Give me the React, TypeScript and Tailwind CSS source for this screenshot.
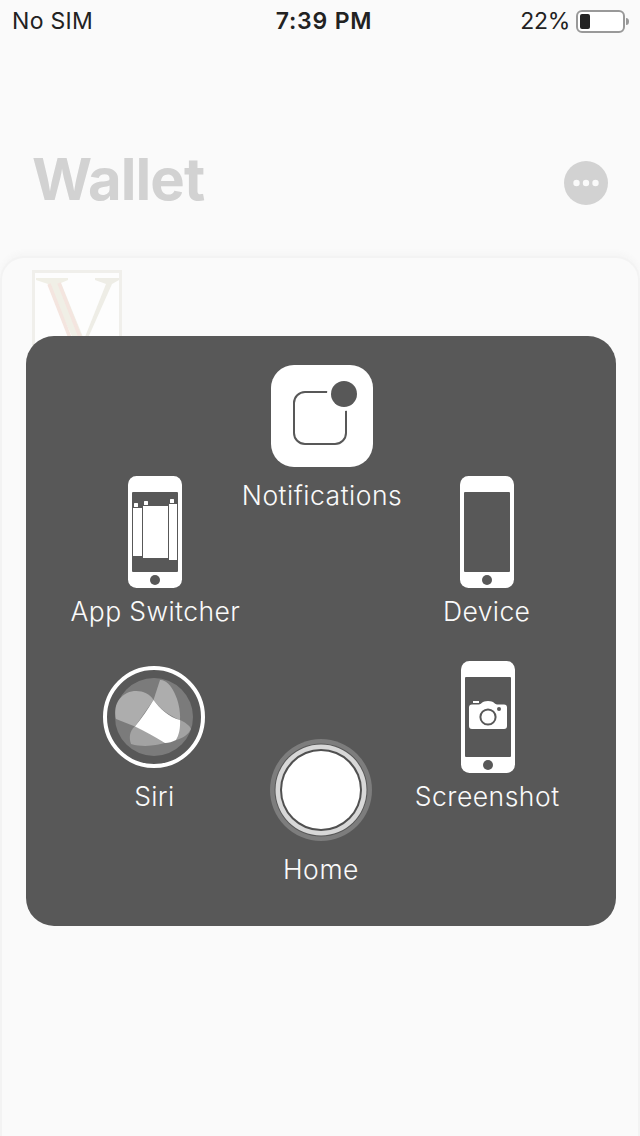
import type { ReactNode } from "react";

function Phone({ children }: { children?: ReactNode }) {
  return (
    <svg className="block h-28 w-[54px]" viewBox="0 0 54 112">
      <rect width="54" height="112" rx="8.5" fill="#fff" />
      <rect x="4" y="16" width="46" height="80" rx="1" fill="#585858" />
      <circle cx="27" cy="104" r="5" fill="#585858" />
      {children}
    </svg>
  );
}

function SwitcherIcon() {
  return (
    <Phone>
      <g fill="#fff">
        <rect x="5" y="32" width="9" height="48" />
        <rect x="15" y="30" width="25" height="52" />
        <rect x="41" y="28" width="8" height="56" />
        <rect x="6" y="27" width="4" height="4" rx="0.5" />
        <rect x="16" y="25" width="4" height="4" rx="0.5" />
        <rect x="42" y="23" width="4" height="4" rx="0.5" />
      </g>
    </Phone>
  );
}

function CameraIcon() {
  return (
    <Phone>
      <rect x="12" y="40" width="6" height="2" fill="#fff" />
      <path
        d="M11 43.5H18C20 43.5 21 40 27 40S34 43.5 36 43.5H43Q46 43.5 46 46.5V65Q46 68 43 68H11Q8 68 8 65V46.5Q8 43.5 11 43.5Z"
        fill="#fff"
      />
      <circle cx="27" cy="56" r="7.6" fill="none" stroke="#585858" strokeWidth="2" />
      <circle cx="38" cy="48" r="2" fill="#585858" />
    </Phone>
  );
}

function NotificationsIcon() {
  return (
    <svg className="block size-[102px]" viewBox="0 0 102 102">
      <rect width="102" height="102" rx="23" fill="#fff" />
      <rect x="23" y="27" width="52" height="52" rx="11" fill="none" stroke="#585858" strokeWidth="2" />
      <circle cx="73" cy="29" r="17" fill="#fff" />
      <circle cx="73" cy="29" r="13" fill="#585858" />
    </svg>
  );
}

function SiriIcon() {
  return (
    <svg className="block size-[102px]" viewBox="0 0 102 102">
      <circle cx="51" cy="51" r="49" fill="none" stroke="#fff" strokeWidth="4" />
      <circle cx="51" cy="51" r="39" fill="#7b7b7b" />
      <path d="M50.5 34C45 25 33 23 24 27C12 33 11 45 13 53L32 60.5Z" fill="#adadad" />
      <path d="M50.5 34L57 14C67 13 78 34 77 54C67 50 58 44 50.5 34Z" fill="#adadad" />
      <path d="M32 60C26 66 26 72 28 78C42 82 55 79 65 76Z" fill="#a3a3a3" />
      <path d="M77 54C83 57 86 59 88 63C85 69 80 72 73 74Z" fill="#a3a3a3" />
      <path d="M50.5 34C57 43 66 51 77 54C77.5 62 76 69 73 74C69 76 66 77 62 77C52 71 42 65 32 60.5C39 52 45 43 50.5 34Z" fill="#fff" />
    </svg>
  );
}

function HomeIcon() {
  return (
    <svg className="block size-[102px]" viewBox="0 0 102 102">
      <circle cx="51" cy="51" r="51" fill="#7d7d7d" />
      <circle cx="51" cy="51" r="46.5" fill="#585858" />
      <circle cx="51" cy="51" r="45.5" fill="#d8d8d8" />
      <circle cx="51" cy="51" r="41" fill="#505050" />
      <circle cx="51" cy="51" r="39" fill="#fff" />
    </svg>
  );
}

function MenuItem({ icon, label, text }: { icon: ReactNode; label: string; text: string }) {
  return (
    <div className="flex flex-col items-center">
      {icon}
      <span className={`whitespace-nowrap text-[26.5px] leading-8 font-light text-[#fafafa] ${text}`}>{label}</span>
    </div>
  );
}

function StatusBar() {
  return (
    <header className="grid h-10 grid-cols-3 items-center pr-[11px] pl-3 text-[23px] leading-10 text-[#222]">
      <span className="pt-px tracking-[0.3px]">No SIM</span>
      <span className="pt-px pl-[7px] text-center font-semibold tracking-[0.8px] whitespace-nowrap">7:39 PM</span>
      <span className="flex h-10 items-center justify-end gap-1.5">
        <span className="pt-px tracking-[-0.3px]">22%</span>
        <svg className="block h-6 w-[53px]" viewBox="0 0 53 24">
          <rect x="1" y="2" width="47" height="21" rx="5" fill="#fff" stroke="#999" strokeWidth="2" />
          <rect x="4" y="5" width="10" height="15" rx="2" fill="#222" />
          <path d="M50 9Q53 9 53 12.5T50 16Z" fill="#999" />
        </svg>
      </span>
    </header>
  );
}

export default function App() {
  return (
    <main className="relative flex h-[1136px] w-[640px] flex-col overflow-hidden bg-[#fafafa] font-['Inter','Liberation_Sans',sans-serif]">
      <StatusBar />
      <div className="flex h-[216px] items-start justify-between pt-[103px] pr-8 pl-8">
        <h1 className="text-[58px] leading-[72px] font-bold tracking-[-0.9px] text-[#d2d2d2]">Wallet</h1>
        <svg className="mt-[18px] block size-11" viewBox="0 0 44 44">
          <circle cx="22" cy="22" r="22" fill="#d2d2d2" />
          <circle cx="12.5" cy="22" r="3.2" fill="#fafafa" />
          <circle cx="22" cy="22" r="3.2" fill="#fafafa" />
          <circle cx="31.5" cy="22" r="3.2" fill="#fafafa" />
        </svg>
      </div>
      <section className="flex-1 rounded-t-[24px] border-x-2 border-t-2 border-[#f3f3f3] bg-[#fafafa] pt-3 pl-[30px] shadow-[0_-4px_4px_#f6f6f6]">
        <svg className="block h-[90px] w-[90px]" viewBox="0 0 90 90">
          <rect x="1.5" y="1.5" width="87" height="87" fill="#fdfdfd" stroke="#f0efeb" strokeWidth="3" />
          <path d="M4 8H36V10L29 13L53 72L48 84L16 14L4 10Z" fill="#f0efe6" />
          <path d="M17 14L42 78M27 13L50 72" fill="none" stroke="#f4e5df" strokeWidth="3.5" />
          <path d="M63 8H87V10L80 14L56 68L48 84L51 72L74 14L63 10Z" fill="#eeede6" />
        </svg>
      </section>

      <nav className="absolute top-[336px] left-[26px] grid h-[590px] w-[590px] grid-cols-3 rounded-[28px] bg-[#585858] px-[45px]">
        <div className="flex flex-col gap-[39px] pt-[140px]">
          <div className="pl-[2px]">
            <MenuItem icon={<SwitcherIcon />} label="App Switcher" text="mt-[7px] tracking-[0.4px]" />
          </div>
          <MenuItem icon={<SiriIcon />} label="Siri" text="mt-3 tracking-[0.3px]" />
        </div>
        <div className="flex flex-col pt-[29px]">
          <div className="pl-0.5">
            <MenuItem icon={<NotificationsIcon />} label="Notifications" text="mt-3 tracking-[0.5px]" />
          </div>
          <div className="mt-[228px]">
            <MenuItem icon={<HomeIcon />} label="Home" text="mt-3 tracking-[0.6px]" />
          </div>
        </div>
        <div className="flex flex-col gap-[34px] pt-[140px]">
          <div className="pr-[2px]">
            <MenuItem icon={<Phone />} label="Device" text="mt-[7px] tracking-[0.4px]" />
          </div>
          <MenuItem icon={<CameraIcon />} label="Screenshot" text="mt-[7px] -ml-px tracking-[0.5px]" />
        </div>
      </nav>
    </main>
  );
}
